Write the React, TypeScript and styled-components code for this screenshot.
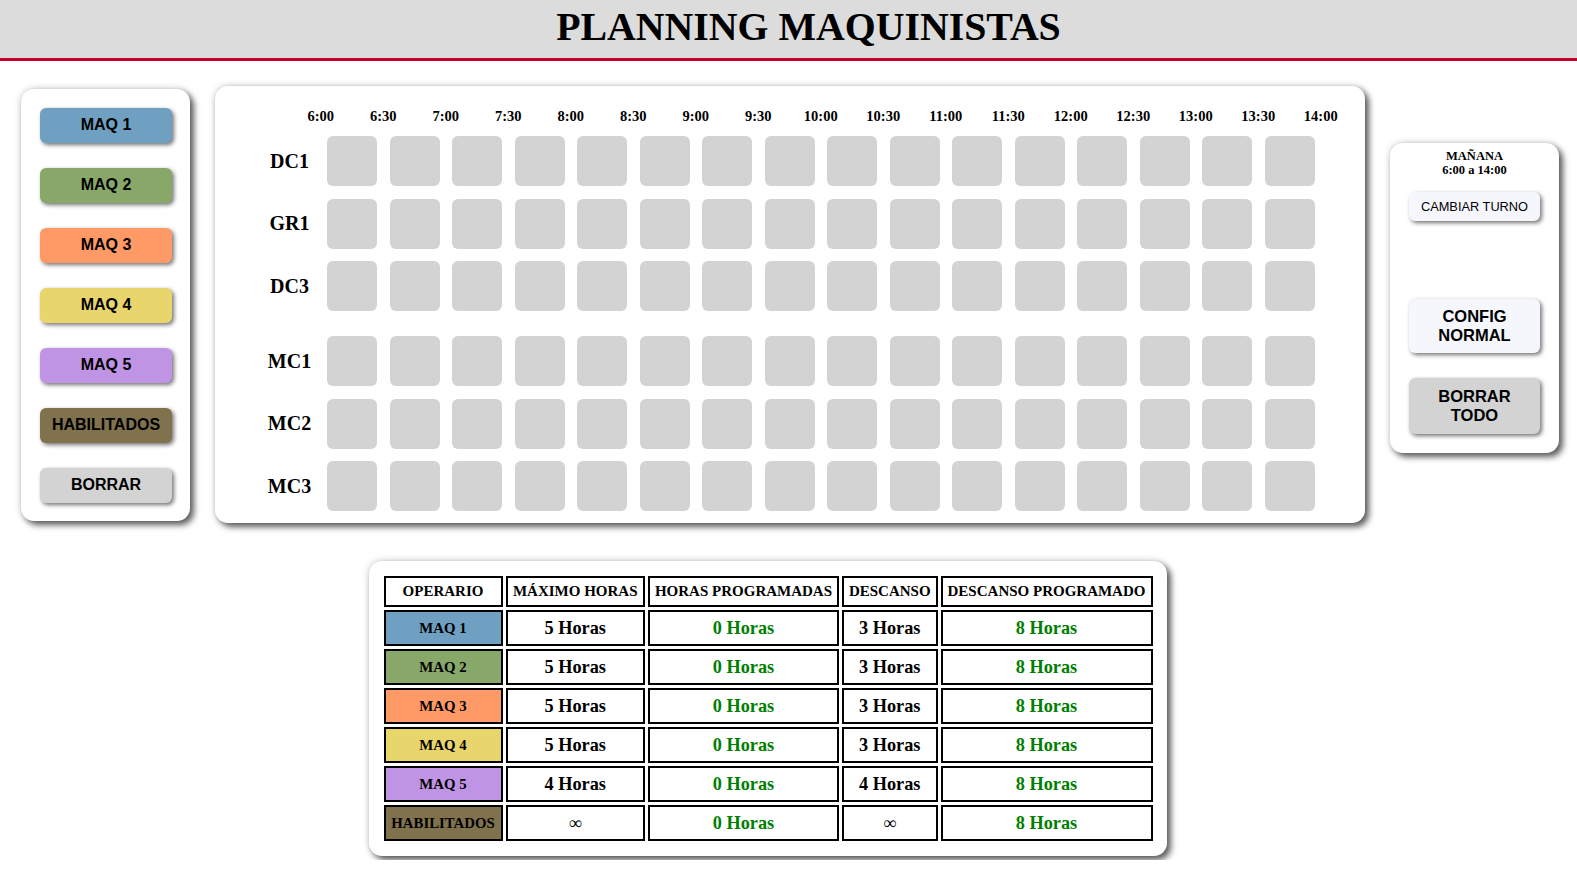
import React from "react";
import styled, { createGlobalStyle } from "styled-components";

const GlobalStyle = createGlobalStyle`
  html, body { margin: 0; padding: 0; background: #ffffff; }
  body { font-family: "Liberation Serif", "Times New Roman", serif; color: #000; }
  * { box-sizing: border-box; }
`;

const Header = styled.header`
  height: 61px;
  background: #dcdcdc;
  border-bottom: 3px solid #c8002e;
  padding-left: 40px;
  padding-bottom: 5px;
  text-align: center;
`;

const Title = styled.h1`
  margin: 0;
  font-family: "Liberation Serif", serif;
  font-weight: 700;
  font-size: 39.8px;
  line-height: 54px;
`;

const MainRow = styled.div`
  display: flex;
  align-items: center;
  gap: 25px;
  padding-left: 21px;
  margin-top: 25px;
`;

const Panel = styled.div`
  background: #fff;
  border-radius: 13px;
  box-shadow: 4px 4px 6px rgba(0, 0, 0, 0.6), 0 0 7px rgba(0, 0, 0, 0.22);
`;

const SidePanel = styled(Panel)`
  width: 169px;
  padding: 19px 18px 18px 19px;
  display: flex;
  flex-direction: column;
  gap: 25px;
`;

const MachineButton = styled.button<{ $bg: string }>`
  width: 132px;
  height: 35px;
  border: none;
  border-radius: 6px;
  background: ${(p) => p.$bg};
  box-shadow: 2px 2px 4px rgba(0, 0, 0, 0.55);
  font-family: "Liberation Sans", Arial, sans-serif;
  font-weight: 700;
  font-size: 16px;
  color: #000;
  padding: 0;
  cursor: pointer;
`;

const GridPanel = styled(Panel)`
  width: 1150px;
  padding: 21.5px 50px 12px 49.5px;
`;

const TimeRow = styled.div`
  display: flex;
  margin-left: 25px;
  margin-bottom: 11.8px;
`;

const TimeLabel = styled.div`
  width: 62.5px;
  flex: none;
  text-align: center;
  font-weight: 700;
  font-size: 14.5px;
  line-height: 16.7px;
`;

const Rows = styled.div`
  display: flex;
  flex-direction: column;
  gap: 12.5px;
`;

const SlotRow = styled.div<{ $extra?: boolean }>`
  display: grid;
  grid-template-columns: repeat(17, 50px);
  column-gap: 12.5px;
  align-items: center;
  margin-top: ${(p) => (p.$extra ? "12.5px" : "0")};
`;

const RowLabel = styled.div`
  text-align: center;
  font-weight: 700;
  font-size: 20px;
  line-height: 23px;
`;

const Slot = styled.div`
  width: 50px;
  height: 50px;
  border-radius: 6px;
  background: #d3d3d3;
`;

const ShiftPanel = styled(Panel)`
  width: 169px;
  padding: 5.6px 19px 19px 19px;
  margin-bottom: 13px;
  display: flex;
  flex-direction: column;
  align-items: center;
`;

const ShiftText = styled.div`
  font-weight: 700;
  font-size: 12.5px;
  line-height: 14.5px;
  text-align: center;
`;

const ShiftButton = styled.button<{ $bg: string; $big?: boolean; $h: number }>`
  width: 131px;
  height: ${(p) => p.$h}px;
  border: none;
  border-radius: 6px;
  background: ${(p) => p.$bg};
  box-shadow: 2px 2px 4px rgba(0, 0, 0, 0.55);
  font-family: "Liberation Sans", Arial, sans-serif;
  font-weight: ${(p) => (p.$big ? 700 : 400)};
  font-size: ${(p) => (p.$big ? "16.5px" : "12.8px")};
  line-height: ${(p) => (p.$big ? "19.3px" : "normal")};
  color: #000;
  padding: 0;
  cursor: pointer;
`;

const Spacer = styled.div<{ $h: number }>`
  height: ${(p) => p.$h}px;
  flex: none;
`;

const TableWrap = styled.div`
  padding-left: 369px;
  margin-top: 38px;
`;

const TablePanel = styled(Panel)`
  display: inline-block;
  padding: 11.5px;
`;

const Table = styled.table`
  border-collapse: separate;
  border-spacing: 3px;
`;

const Th = styled.th<{ $w: number }>`
  width: ${(p) => p.$w}px;
  border: 2px solid #000;
  padding: 0;
  font-weight: 700;
  font-size: 15px;
  line-height: 27.5px;
  white-space: nowrap;
  text-align: center;
`;

const NameCell = styled.td<{ $bg: string }>`
  border: 2px solid #000;
  background: ${(p) => p.$bg};
  padding: 0;
  font-weight: 700;
  font-size: 14.8px;
  line-height: 32px;
  text-align: center;
  white-space: nowrap;
`;

const ValueCell = styled.td<{ $green?: boolean; $light?: boolean }>`
  border: 2px solid #000;
  padding: 0;
  font-weight: ${(p) => (p.$light ? 400 : 700)};
  font-size: 18.3px;
  line-height: 32px;
  text-align: center;
  color: ${(p) => (p.$green ? "#008000" : "#000")};
  white-space: nowrap;
`;

const machines = [
  { name: "MAQ 1", color: "#6fa0c2", max: "5 Horas", rest: "3 Horas" },
  { name: "MAQ 2", color: "#88a86a", max: "5 Horas", rest: "3 Horas" },
  { name: "MAQ 3", color: "#ff9966", max: "5 Horas", rest: "3 Horas" },
  { name: "MAQ 4", color: "#e8d66c", max: "5 Horas", rest: "3 Horas" },
  { name: "MAQ 5", color: "#bf94e4", max: "4 Horas", rest: "4 Horas" },
  { name: "HABILITADOS", color: "#80724c", max: "∞", rest: "∞" },
];

const times = [
  "6:00", "6:30", "7:00", "7:30", "8:00", "8:30", "9:00", "9:30", "10:00",
  "10:30", "11:00", "11:30", "12:00", "12:30", "13:00", "13:30", "14:00",
];

const rows = ["DC1", "GR1", "DC3", "MC1", "MC2", "MC3"];

const columns = [
  { label: "OPERARIO", w: 119 },
  { label: "MÁXIMO HORAS", w: 139.5 },
  { label: "HORAS PROGRAMADAS", w: 191 },
  { label: "DESCANSO", w: 95.5 },
  { label: "DESCANSO PROGRAMADO", w: 212 },
];

export default function App() {
  return (
    <>
      <GlobalStyle />
      <Header>
        <Title>PLANNING MAQUINISTAS</Title>
      </Header>
      <MainRow>
        <SidePanel>
          {machines.map((m) => (
            <MachineButton key={m.name} $bg={m.color}>
              {m.name}
            </MachineButton>
          ))}
          <MachineButton $bg="#d3d3d3">BORRAR</MachineButton>
        </SidePanel>
        <GridPanel>
          <TimeRow>
            {times.map((t) => (
              <TimeLabel key={t}>{t}</TimeLabel>
            ))}
          </TimeRow>
          <Rows>
            {rows.map((r) => (
              <SlotRow key={r} $extra={r === "MC1"}>
                <RowLabel>{r}</RowLabel>
                {Array.from({ length: 16 }).map((_, i) => (
                  <Slot key={i} />
                ))}
              </SlotRow>
            ))}
          </Rows>
        </GridPanel>
        <ShiftPanel>
          <ShiftText>MAÑANA</ShiftText>
          <ShiftText>6:00 a 14:00</ShiftText>
          <Spacer $h={14.4} />
          <ShiftButton $bg="#f6f7fd" $h={29}>CAMBIAR TURNO</ShiftButton>
          <Spacer $h={78} />
          <ShiftButton $bg="#f6f7fd" $big $h={54}>
            CONFIG
            <br />
            NORMAL
          </ShiftButton>
          <Spacer $h={25} />
          <ShiftButton $bg="#d3d3d3" $big $h={56}>
            BORRAR
            <br />
            TODO
          </ShiftButton>
        </ShiftPanel>
      </MainRow>
      <TableWrap>
        <TablePanel>
          <Table>
            <thead>
              <tr>
                {columns.map((c) => (
                  <Th key={c.label} $w={c.w}>
                    {c.label}
                  </Th>
                ))}
              </tr>
            </thead>
            <tbody>
              {machines.map((m) => (
                <tr key={m.name}>
                  <NameCell $bg={m.color}>{m.name}</NameCell>
                  <ValueCell $light={m.max === "∞"}>{m.max}</ValueCell>
                  <ValueCell $green>0 Horas</ValueCell>
                  <ValueCell $light={m.rest === "∞"}>{m.rest}</ValueCell>
                  <ValueCell $green>8 Horas</ValueCell>
                </tr>
              ))}
            </tbody>
          </Table>
        </TablePanel>
      </TableWrap>
    </>
  );
}
